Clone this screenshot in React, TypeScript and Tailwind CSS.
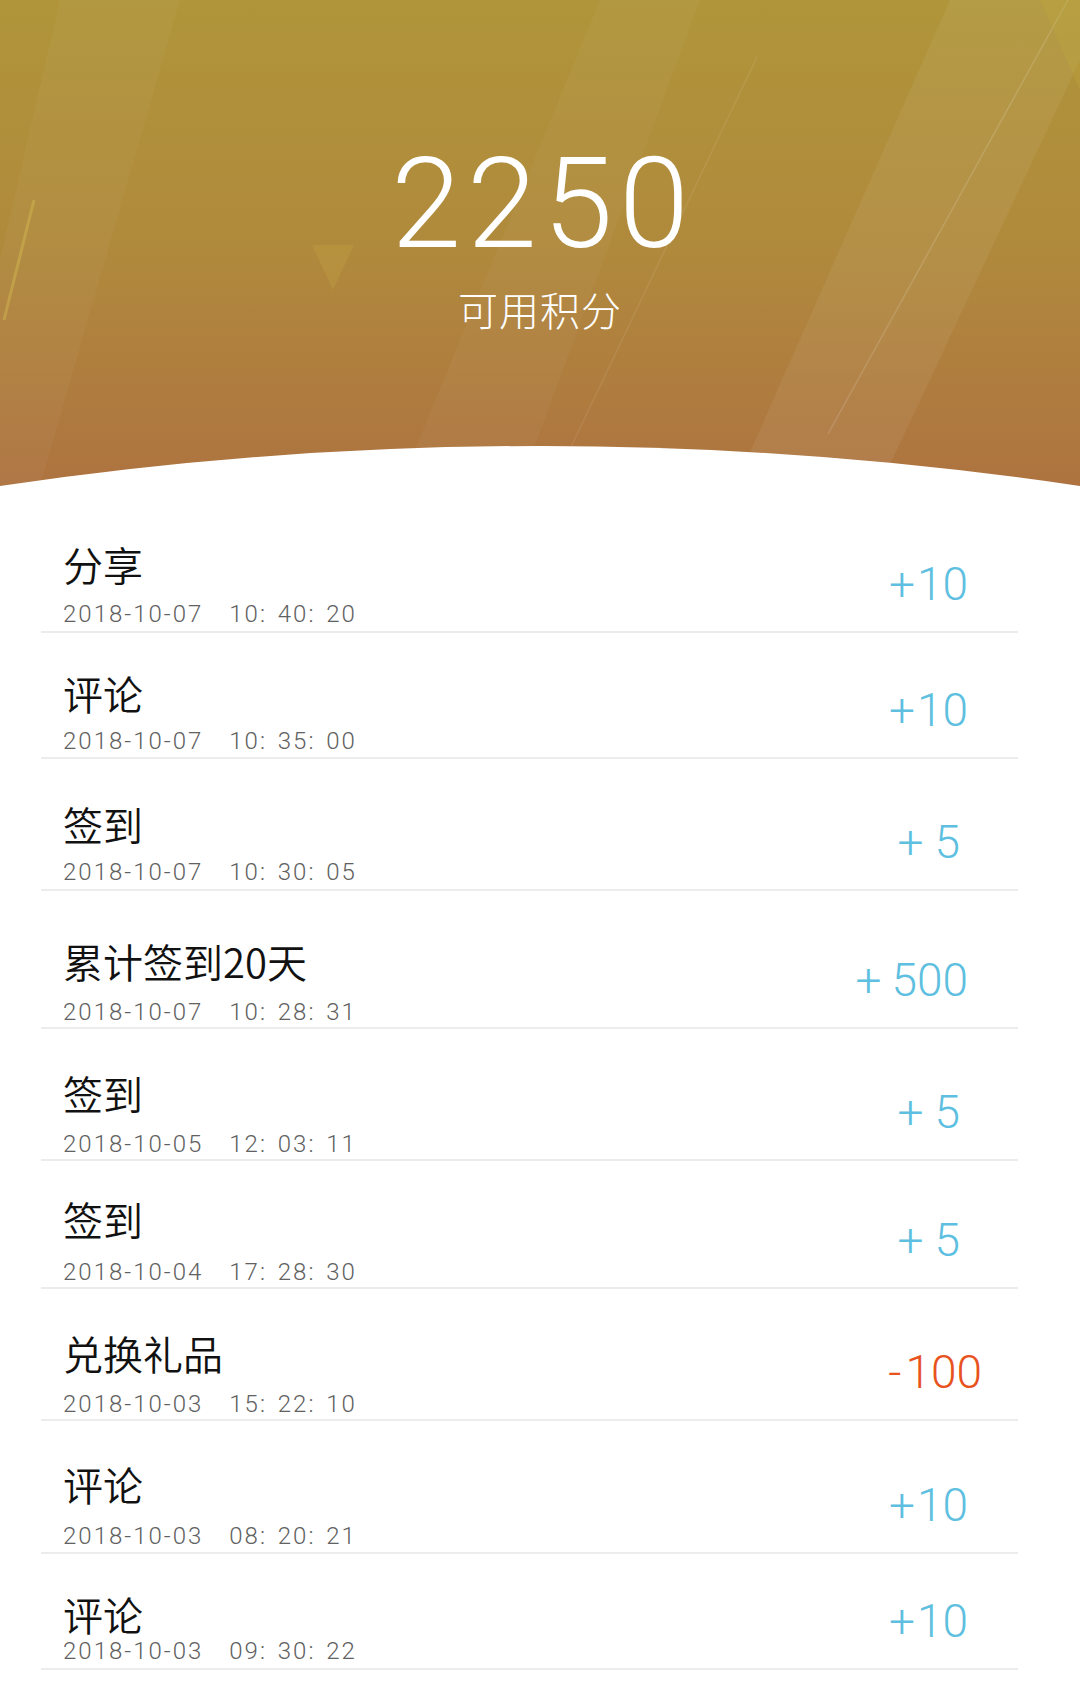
import React from 'react';

type Record = {
  title: string;
  date: string;
  time: string;
  sign: string;
  value: string;
  minus?: boolean;
  pt: string;
  gap: string;
  pb: string;
  mr: string;
  signGap: string;
};

const records: Record[] = [
  { title: '分享', date: '2018-10-07', time: '10: 40: 20', sign: '+', value: '10', pt: 'pt-[58px]', gap: 'mt-[18px]', pb: 'pb-[5px]', mr: 'mr-[50px]', signGap: 'ml-[2px]' },
  { title: '评论', date: '2018-10-07', time: '10: 35: 00', sign: '+', value: '10', pt: 'pt-[40px]', gap: 'mt-[16px]', pb: 'pb-[4px]', mr: 'mr-[50px]', signGap: 'ml-[2px]' },
  { title: '签到', date: '2018-10-07', time: '10: 30: 05', sign: '+', value: '5', pt: 'pt-[45px]', gap: 'mt-[16px]', pb: 'pb-[5px]', mr: 'mr-[58px]', signGap: 'ml-[11px]' },
  { title: '累计签到20天', date: '2018-10-07', time: '10: 28: 31', sign: '+', value: '500', pt: 'pt-[50px]', gap: 'mt-[19px]', pb: 'pb-[3px]', mr: 'mr-[50px]', signGap: 'ml-[10px]' },
  { title: '签到', date: '2018-10-05', time: '12: 03: 11', sign: '+', value: '5', pt: 'pt-[44px]', gap: 'mt-[19px]', pb: 'pb-[3px]', mr: 'mr-[58px]', signGap: 'ml-[11px]' },
  { title: '签到', date: '2018-10-04', time: '17: 28: 30', sign: '+', value: '5', pt: 'pt-[38px]', gap: 'mt-[21px]', pb: 'pb-[3px]', mr: 'mr-[58px]', signGap: 'ml-[11px]' },
  { title: '兑换礼品', date: '2018-10-03', time: '15: 22: 10', sign: '-', value: '100', minus: true, pt: 'pt-[44px]', gap: 'mt-[19px]', pb: 'pb-[3px]', mr: 'mr-[36px]', signGap: 'ml-[4px]' },
  { title: '评论', date: '2018-10-03', time: '08: 20: 21', sign: '+', value: '10', pt: 'pt-[43px]', gap: 'mt-[20px]', pb: 'pb-[4px]', mr: 'mr-[50px]', signGap: 'ml-[2px]' },
  { title: '评论', date: '2018-10-03', time: '09: 30: 22', sign: '+', value: '10', pt: 'pt-[40px]', gap: 'mt-[5px]', pb: 'pb-[5px]', mr: 'mr-[50px]', signGap: 'ml-[2px]' },
];

function Header() {
  return (
    <div className="relative h-[486px] bg-gradient-to-b from-[#b0953a] via-[#b08a3c] to-[#ae7340] overflow-hidden">
      {/* background streaks + bottom arc */}
      <svg className="absolute inset-0 h-full w-full" viewBox="0 0 1080 486" preserveAspectRatio="none">
        <polygon points="950,0 1080,0 1080,60 880,486 735,486" fill="#ffffff" opacity="0.06" />
        <line x1="1068" y1="0" x2="828" y2="434" stroke="#ffffff" strokeOpacity="0.14" strokeWidth="1.5" />
        <line x1="757" y1="57" x2="560" y2="470" stroke="#ffffff" strokeOpacity="0.08" strokeWidth="1.5" />
        <polygon points="600,0 700,0 520,486 400,486" fill="#ffffff" opacity="0.03" />
        <polygon points="60,0 180,0 40,486 0,486 0,260" fill="#ffffff" opacity="0.03" />
        <line x1="34" y1="200" x2="4" y2="320" stroke="#d8c054" strokeOpacity="0.4" strokeWidth="3" />
        <polygon points="1040,0 1080,0 1080,90" fill="#c0ac3c" opacity="0.25" />
        <polygon points="312,245 354,245 333,290" fill="#c2a545" opacity="0.3" />
        <path d="M0 486 Q540 406 1080 486 Z" fill="#ffffff" />
      </svg>
      <div className="relative flex flex-col items-center pt-[141px]">
        <div className="font-['Roboto',sans-serif] font-light text-[126px] leading-none tracking-[6px] pl-[6px] text-white">
          2250
        </div>
        <div className="mt-[22px] font-['Noto_Sans_CJK_SC',sans-serif] font-light text-[40px] leading-none tracking-[1px] text-white">
          可用积分
        </div>
      </div>
    </div>
  );
}

function Row({ r }: { r: Record }) {
  return (
    <div className="flex items-end justify-between border-b-2 border-[#ececec]">
      <div className={`pl-[22px] ${r.pt} ${r.pb}`}>
        <div className="font-['Noto_Sans_CJK_SC',sans-serif] font-[350] text-[40px] leading-none text-[#111111]">{r.title}</div>
        <div className={`${r.gap} font-['Roboto',sans-serif] font-light text-[24px] leading-none tracking-[2px] text-[#616161] whitespace-pre`}>
          <span>{r.date}</span>
          <span className="ml-[26px] [word-spacing:3px]">{r.time}</span>
        </div>
      </div>
      <div
        className={`mb-[24px] ${r.mr} flex font-['Roboto',sans-serif] font-light text-[46px] leading-none ${
          r.minus ? 'text-[#e8521d]' : 'text-[#5ebfe0]'
        }`}
      >
        <span>{r.sign}</span>
        <span className={r.signGap}>{r.value}</span>
      </div>
    </div>
  );
}

export default function App() {
  return (
    <div className="w-[1080px] min-h-[1705px] bg-white">
      <Header />
      <div className="ml-[41px] mr-[62px]">
        {records.map((r, i) => (
          <Row key={i} r={r} />
        ))}
      </div>
    </div>
  );
}
